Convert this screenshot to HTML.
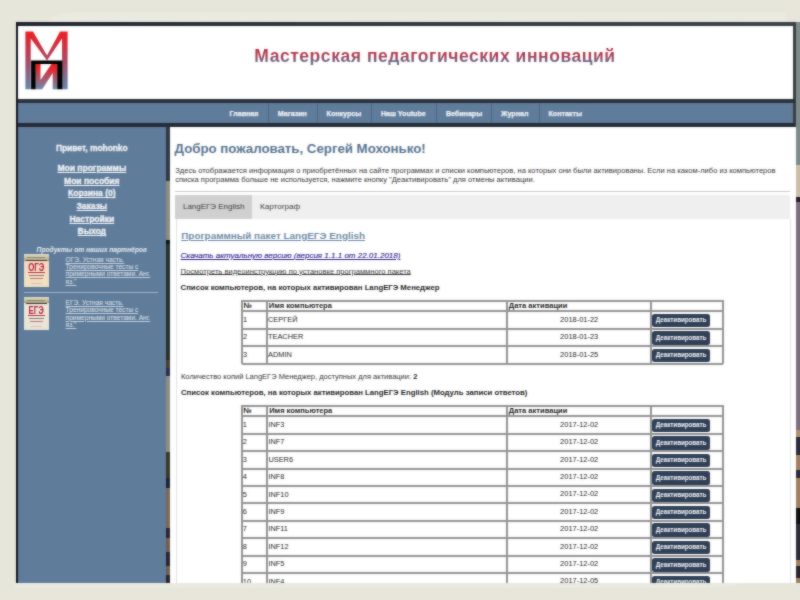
<!DOCTYPE html>
<html><head><meta charset="utf-8">
<style>
*{margin:0;padding:0;box-sizing:border-box}
html,body{width:800px;height:600px;overflow:hidden;background:#E7E6DB;font-family:"Liberation Sans",sans-serif;position:relative}
.r{position:absolute}
.t{position:absolute;white-space:nowrap;line-height:1}
.w{position:absolute;left:0;top:0;width:800px;height:600px;overflow:hidden}
.btn{position:absolute;width:57.6px;height:13.4px;background:#2F3F56;border-radius:2.5px;overflow:hidden}
.btn span{position:absolute;left:0;top:3.4px;width:57.6px;text-align:center;font-size:6.3px;line-height:1;font-weight:bold;color:#F4F6FA;letter-spacing:-0.05px;white-space:nowrap}
</style></head><body>
<div class="w">
<div class="r" style="left:0.00px;top:0.00px;width:800.00px;height:600.00px;background:#E7E6DB;"></div>
<div class="r" style="left:48.00px;top:12.00px;width:738.00px;height:10.00px;background:#EBEAE0;border-top-left-radius:30px 10px;"></div>
<div class="r" style="left:16.00px;top:22.00px;width:784.00px;height:561.00px;background:linear-gradient(90deg,#1E2330,#2E343C 40%,#3A4044);"></div>
<div class="r" style="left:16.00px;top:22.00px;width:2.30px;height:561.00px;background:#121622;"></div>
<div class="r" style="left:18.00px;top:26.00px;width:775.20px;height:73.00px;background:#FFFFFF;"></div>
<div class="r" style="left:18.00px;top:99.00px;width:777.00px;height:4.00px;background:#2B313B;"></div>
<div class="r" style="left:18.00px;top:103.00px;width:775.00px;height:19.50px;background:#5F7C9B;"></div>
<div class="r" style="left:18.00px;top:122.50px;width:777.00px;height:4.50px;background:#242B36;"></div>
<div class="r" style="left:18.00px;top:127.00px;width:147.80px;height:456.00px;background:#5F7C9B;"></div>
<div class="r" style="left:165.80px;top:127.00px;width:4.20px;height:54.00px;background:#2F3845;"></div>
<div class="r" style="left:165.80px;top:181.00px;width:4.20px;height:59.00px;background:#8E8D80;"></div>
<div class="r" style="left:165.80px;top:240.00px;width:4.20px;height:4.00px;background:#111;"></div>
<div class="r" style="left:165.80px;top:244.00px;width:4.20px;height:116.00px;background:#24302B;"></div>
<div class="r" style="left:165.80px;top:360.00px;width:4.20px;height:8.00px;background:#4A3E30;"></div>
<div class="r" style="left:165.80px;top:368.00px;width:4.20px;height:8.00px;background:#2A2E48;"></div>
<div class="r" style="left:165.80px;top:376.00px;width:4.20px;height:76.00px;background:#8D8D84;"></div>
<div class="r" style="left:165.80px;top:452.00px;width:4.20px;height:26.00px;background:#3B3629;"></div>
<div class="r" style="left:165.80px;top:478.00px;width:4.20px;height:10.00px;background:#1E2236;"></div>
<div class="r" style="left:165.80px;top:488.00px;width:4.20px;height:40.00px;background:#7A6A58;"></div>
<div class="r" style="left:165.80px;top:528.00px;width:4.20px;height:10.00px;background:#2A2430;"></div>
<div class="r" style="left:165.80px;top:538.00px;width:4.20px;height:14.00px;background:#6E6050;"></div>
<div class="r" style="left:165.80px;top:552.00px;width:4.20px;height:14.00px;background:#2A2430;"></div>
<div class="r" style="left:165.80px;top:566.00px;width:4.20px;height:9.00px;background:#6E6050;"></div>
<div class="r" style="left:165.80px;top:575.00px;width:4.20px;height:8.00px;background:#2A2430;"></div>
<div class="r" style="left:170.00px;top:127.00px;width:625.50px;height:456.00px;background:#FFFFFF;"></div>
<div class="r" style="left:796.30px;top:22.00px;width:3.70px;height:143.00px;background:#7E8C8C;"></div>
<div class="r" style="left:796.30px;top:165.00px;width:3.70px;height:32.00px;background:#CDBFA6;"></div>
<div class="r" style="left:796.30px;top:197.00px;width:3.70px;height:5.00px;background:#2A2030;"></div>
<div class="r" style="left:796.30px;top:202.00px;width:3.70px;height:228.00px;background:#7C6E7E;"></div>
<div class="r" style="left:796.30px;top:430.00px;width:3.70px;height:7.00px;background:#B09070;"></div>
<div class="r" style="left:796.30px;top:437.00px;width:3.70px;height:18.00px;background:#2A2A40;"></div>
<div class="r" style="left:796.30px;top:455.00px;width:3.70px;height:15.00px;background:#A08060;"></div>
<div class="r" style="left:796.30px;top:470.00px;width:3.70px;height:8.00px;background:#2A2A40;"></div>
<div class="r" style="left:796.30px;top:478.00px;width:3.70px;height:30.00px;background:#A08060;"></div>
<div class="r" style="left:796.30px;top:508.00px;width:3.70px;height:16.00px;background:#111;"></div>
<div class="r" style="left:796.30px;top:524.00px;width:3.70px;height:36.00px;background:#2E2A38;"></div>
<div class="r" style="left:796.30px;top:560.00px;width:3.70px;height:6.00px;background:#A08060;"></div>
<div class="r" style="left:796.30px;top:566.00px;width:3.70px;height:12.00px;background:#2A2430;"></div>
<div class="r" style="left:796.30px;top:578.00px;width:3.70px;height:5.00px;background:#A08060;"></div>
<svg class="r" style="left:0;top:0" width="80" height="100" viewBox="0 0 80 100">
<defs>
<linearGradient id="g1" x1="0" y1="31.4" x2="0" y2="89.3" gradientUnits="userSpaceOnUse"><stop offset="0" stop-color="#F01C22"/><stop offset="0.5" stop-color="#A84A64"/><stop offset="1" stop-color="#6488AE"/></linearGradient>
<linearGradient id="g2" x1="0" y1="64" x2="0" y2="89.2" gradientUnits="userSpaceOnUse"><stop offset="0.1" stop-color="#F01C22"/><stop offset="1" stop-color="#6A8CB0"/></linearGradient>
</defs>
<polygon fill="url(#g1)" points="25.4,31.4 33,31.4 47,55.5 60.1,31.4 67.6,31.4 67.6,89.3 62,89.3 62,38.5 47,60.5 30.75,38.5 30.75,89.3 25.4,89.3"/>
<polygon fill="url(#g2)" points="35.7,64 40.5,64 40.5,80 51.5,64 57.2,64 57.2,89.2 52.7,89.2 52.7,73 42.2,89.2 35.7,89.2"/>
<path fill="#000" d="M31.1,60.5H62.3V89.2H57.2V64H35.7V89.2H31.1Z"/>
</svg>
<div class="t " style="left:254.30px;top:47.58px;font-size:17.5px;font-weight:bold;font-style:normal;color:transparent;letter-spacing:0.55px;background:linear-gradient(#C02E40 0%,#B8344A 30%,#964A62 58%,#66708E 85%);-webkit-background-clip:text;background-clip:text;color:transparent;">Мастерская педагогических инноваций</div>
<div class="r" style="left:267.60px;top:103.00px;width:1.00px;height:19.50px;background:#4E6986;"></div>
<div class="r" style="left:316.70px;top:103.00px;width:1.00px;height:19.50px;background:#4E6986;"></div>
<div class="r" style="left:370.80px;top:103.00px;width:1.00px;height:19.50px;background:#4E6986;"></div>
<div class="r" style="left:435.70px;top:103.00px;width:1.00px;height:19.50px;background:#4E6986;"></div>
<div class="r" style="left:491.10px;top:103.00px;width:1.00px;height:19.50px;background:#4E6986;"></div>
<div class="r" style="left:538.80px;top:103.00px;width:1.00px;height:19.50px;background:#4E6986;"></div>
<div class="t " style="left:229.60px;top:110.59px;font-size:7.1px;font-weight:bold;font-style:normal;color:#F0F3F6;-webkit-text-stroke:0.25px currentColor;">Главная</div>
<div class="t " style="left:277.80px;top:110.59px;font-size:7.1px;font-weight:bold;font-style:normal;color:#F0F3F6;-webkit-text-stroke:0.25px currentColor;">Магазин</div>
<div class="t " style="left:326.60px;top:110.59px;font-size:7.1px;font-weight:bold;font-style:normal;color:#F0F3F6;-webkit-text-stroke:0.25px currentColor;">Конкурсы</div>
<div class="t " style="left:380.90px;top:110.59px;font-size:7.1px;font-weight:bold;font-style:normal;color:#F0F3F6;-webkit-text-stroke:0.25px currentColor;">Наш Youtube</div>
<div class="t " style="left:445.90px;top:110.59px;font-size:7.1px;font-weight:bold;font-style:normal;color:#F0F3F6;-webkit-text-stroke:0.25px currentColor;">Вебинары</div>
<div class="t " style="left:501.10px;top:110.59px;font-size:7.1px;font-weight:bold;font-style:normal;color:#F0F3F6;-webkit-text-stroke:0.25px currentColor;">Журнал</div>
<div class="t " style="left:548.50px;top:110.59px;font-size:7.1px;font-weight:bold;font-style:normal;color:#F0F3F6;-webkit-text-stroke:0.25px currentColor;">Контакты</div>
<div class="t" style="left:-58.20px;width:300px;text-align:center;top:143.69px;font-size:8.4px;font-weight:bold;font-style:normal;color:#F0F3F6;-webkit-text-stroke:0.3px currentColor;">Привет, mohonko</div>
<div class="t" style="left:-58.20px;width:300px;text-align:center;top:163.90px;font-size:8.5px;font-weight:bold;font-style:normal;color:#F0F3F6;text-decoration:underline;-webkit-text-stroke:0.3px currentColor;">Мои программы</div>
<div class="t" style="left:-58.20px;width:300px;text-align:center;top:176.60px;font-size:8.5px;font-weight:bold;font-style:normal;color:#F0F3F6;text-decoration:underline;-webkit-text-stroke:0.3px currentColor;">Мои пособия</div>
<div class="t" style="left:-58.20px;width:300px;text-align:center;top:189.30px;font-size:8.5px;font-weight:bold;font-style:normal;color:#F0F3F6;text-decoration:underline;-webkit-text-stroke:0.3px currentColor;">Корзина (0)</div>
<div class="t" style="left:-58.20px;width:300px;text-align:center;top:202.00px;font-size:8.5px;font-weight:bold;font-style:normal;color:#F0F3F6;text-decoration:underline;-webkit-text-stroke:0.3px currentColor;">Заказы</div>
<div class="t" style="left:-58.20px;width:300px;text-align:center;top:214.70px;font-size:8.5px;font-weight:bold;font-style:normal;color:#F0F3F6;text-decoration:underline;-webkit-text-stroke:0.3px currentColor;">Настройки</div>
<div class="t" style="left:-58.20px;width:300px;text-align:center;top:227.40px;font-size:8.5px;font-weight:bold;font-style:normal;color:#F0F3F6;text-decoration:underline;-webkit-text-stroke:0.3px currentColor;">Выход</div>
<div class="t " style="left:36.60px;top:246.56px;font-size:6.66px;font-weight:bold;font-style:italic;color:#E8ECF2;">Продукты от наших партнёров</div>
<div class="r" style="left:24.3px;top:253.8px;width:24.5px;height:33.2px;background:linear-gradient(#F6D6C0,#F4DEC2 60%,#F2E2C0);overflow:hidden">
<div class="r" style="left:0;top:0;width:24.5px;height:6.8px;background:linear-gradient(#E2DECA,#BEB898 70%,#A09A78)"></div>
<div class="r" style="left:3px;top:3.5px;width:18px;height:1.2px;background:#7A6E50;opacity:.7"></div>
<div class="r" style="left:2px;top:6.6px;width:20.5px;height:1px;background:#3A3A3A"></div>
<div class="t" style="left:-5px;width:34.5px;text-align:center;top:8.6px;font-size:10.75px;line-height:10.75px;font-weight:bold;color:#B82040;transform:scaleX(0.73)">ОГЭ</div>
<div class="r" style="left:3.5px;top:18px;width:17.5px;height:1.7px;background:#C03048"></div>
<div class="r" style="left:5px;top:21px;width:14.5px;height:1px;background:#8A7A78"></div>
<div class="r" style="left:5.5px;top:24.5px;width:13.5px;height:1px;background:#C07080"></div>
<div class="r" style="left:7px;top:29px;width:10.5px;height:.8px;background:#D8C0B0"></div>
</div>
<div class="r" style="left:24.3px;top:296.6px;width:24.5px;height:33.2px;background:linear-gradient(#EEE8DC,#EAE6D6);overflow:hidden">
<div class="r" style="left:0;top:0;width:24.5px;height:6.8px;background:linear-gradient(#E2DECA,#BEB898 70%,#A09A78)"></div>
<div class="r" style="left:3px;top:3.5px;width:18px;height:1.2px;background:#7A6E50;opacity:.7"></div>
<div class="r" style="left:2px;top:6.6px;width:20.5px;height:1px;background:#3A3A3A"></div>
<div class="t" style="left:-5px;width:34.5px;text-align:center;top:8.6px;font-size:10.75px;line-height:10.75px;font-weight:bold;color:#B82040;transform:scaleX(0.73)">ЕГЭ</div>
<div class="r" style="left:3.5px;top:18px;width:17.5px;height:1.7px;background:#C03048"></div>
<div class="r" style="left:5px;top:21px;width:14.5px;height:1px;background:#8A7A78"></div>
<div class="r" style="left:5.5px;top:24.5px;width:13.5px;height:1px;background:#C07080"></div>
<div class="r" style="left:7px;top:29px;width:10.5px;height:.8px;background:#D8C0B0"></div>
</div>
<div class="t " style="left:65.60px;top:257.21px;font-size:6.6px;font-weight:normal;font-style:normal;color:#E0E6EE;text-decoration:underline;text-decoration-color:rgba(230,236,242,.75);">ОГЭ. Устная часть.</div>
<div class="t " style="left:65.60px;top:264.31px;font-size:6.6px;font-weight:normal;font-style:normal;color:#E0E6EE;text-decoration:underline;text-decoration-color:rgba(230,236,242,.75);">Тренировочные тесты с</div>
<div class="t " style="left:65.60px;top:271.41px;font-size:6.6px;font-weight:normal;font-style:normal;color:#E0E6EE;text-decoration:underline;text-decoration-color:rgba(230,236,242,.75);">примерными ответами. Анг.</div>
<div class="t " style="left:65.60px;top:278.51px;font-size:6.6px;font-weight:normal;font-style:normal;color:#E0E6EE;text-decoration:underline;text-decoration-color:rgba(230,236,242,.75);">яз."</div>
<div class="r" style="left:24.40px;top:291.80px;width:133.90px;height:1.00px;background:#A3B4C8;"></div>
<div class="t " style="left:65.60px;top:300.31px;font-size:6.6px;font-weight:normal;font-style:normal;color:#E0E6EE;text-decoration:underline;text-decoration-color:rgba(230,236,242,.75);">ЕГЭ. Устная часть.</div>
<div class="t " style="left:65.60px;top:307.41px;font-size:6.6px;font-weight:normal;font-style:normal;color:#E0E6EE;text-decoration:underline;text-decoration-color:rgba(230,236,242,.75);">Тренировочные тесты с</div>
<div class="t " style="left:65.60px;top:314.51px;font-size:6.6px;font-weight:normal;font-style:normal;color:#E0E6EE;text-decoration:underline;text-decoration-color:rgba(230,236,242,.75);">примерными ответами. Анг.</div>
<div class="t " style="left:65.60px;top:321.61px;font-size:6.6px;font-weight:normal;font-style:normal;color:#E0E6EE;text-decoration:underline;text-decoration-color:rgba(230,236,242,.75);">яз."</div>
<div class="t " style="left:174.60px;top:142.08px;font-size:13.25px;font-weight:bold;font-style:normal;color:#58738F;">Добро пожаловать, Сергей Мохонько!</div>
<div class="t " style="left:175.25px;top:166.51px;font-size:7.55px;font-weight:normal;font-style:normal;color:#333;">Здесь отображается информация о приобретённых на сайте программах и списки компьютеров, на которых они были активированы. Если на каком-либо из компьютеров</div>
<div class="t " style="left:175.25px;top:175.51px;font-size:7.55px;font-weight:normal;font-style:normal;color:#333;">списка программа больше не используется, нажмите кнопку "Деактивировать" для отмены активации.</div>
<div class="r" style="left:174.75px;top:191.00px;width:615.25px;height:1.00px;background:#CBCBCB;"></div>
<div class="r" style="left:174.75px;top:195.00px;width:615.25px;height:23.80px;background:#EFEFEF;"></div>
<div class="r" style="left:174.75px;top:195.00px;width:77.25px;height:23.80px;background:#D0D0D0;"></div>
<div class="t " style="left:183.00px;top:202.84px;font-size:7.98px;font-weight:normal;font-style:normal;color:#3C3C3C;-webkit-text-stroke:0;">LangЕГЭ English</div>
<div class="t " style="left:260.00px;top:202.74px;font-size:8.1px;font-weight:normal;font-style:normal;color:#3C3C3C;-webkit-text-stroke:0;">Картограф</div>
<div class="r" style="left:175.50px;top:218.80px;width:1.00px;height:364.20px;background:#E3E3E3;"></div>
<div class="r" style="left:789.80px;top:218.80px;width:1.00px;height:364.20px;background:#E8E8E8;"></div>
<div class="t " style="left:181.25px;top:230.50px;font-size:9.92px;font-weight:bold;font-style:normal;color:#6C8BA6;text-decoration:underline;">Программный пакет LangЕГЭ English</div>
<div class="t " style="left:180.60px;top:251.73px;font-size:8.0px;font-weight:normal;font-style:italic;color:#34248E;-webkit-text-stroke:0.15px currentColor;text-decoration:underline;text-decoration-thickness:0.7px;text-underline-offset:0.6px;">Скачать актуальную версию (версия 1.1.1 от 22.01.2018)</div>
<div class="t " style="left:180.60px;top:268.39px;font-size:7.57px;font-weight:normal;font-style:normal;color:#3A3A3A;text-decoration:underline;text-decoration-thickness:0.7px;text-underline-offset:0.4px;">Посмотреть видеоинструкцию по установке программного пакета</div>
<div class="t " style="left:180.60px;top:284.14px;font-size:7.75px;font-weight:bold;font-style:normal;color:#1E1E1E;-webkit-text-stroke:0;">Список компьютеров, на которых активирован LangЕГЭ Менеджер</div>
<div class="r" style="left:241.70px;top:300.20px;width:481.00px;height:2.00px;background:#949494;"></div>
<div class="r" style="left:241.70px;top:310.00px;width:481.00px;height:2.00px;background:#949494;"></div>
<div class="r" style="left:241.70px;top:327.50px;width:481.00px;height:2.00px;background:#949494;"></div>
<div class="r" style="left:241.70px;top:345.00px;width:481.00px;height:2.00px;background:#949494;"></div>
<div class="r" style="left:241.70px;top:362.50px;width:481.00px;height:2.00px;background:#949494;"></div>
<div class="r" style="left:240.70px;top:300.20px;width:2.00px;height:64.30px;background:#949494;"></div>
<div class="r" style="left:265.50px;top:300.20px;width:2.00px;height:64.30px;background:#949494;"></div>
<div class="r" style="left:506.30px;top:300.20px;width:2.00px;height:64.30px;background:#949494;"></div>
<div class="r" style="left:650.00px;top:300.20px;width:2.00px;height:64.30px;background:#949494;"></div>
<div class="r" style="left:721.70px;top:300.20px;width:2.00px;height:64.30px;background:#949494;"></div>
<div class="t " style="left:243.70px;top:302.05px;font-size:7.5px;font-weight:bold;font-style:normal;color:#222;-webkit-text-stroke:0;">№</div>
<div class="t " style="left:268.80px;top:302.05px;font-size:7.5px;font-weight:bold;font-style:normal;color:#222;-webkit-text-stroke:0;">Имя компьютера</div>
<div class="t " style="left:508.80px;top:302.01px;font-size:7.55px;font-weight:bold;font-style:normal;color:#222;-webkit-text-stroke:0;">Дата активации</div>
<div class="t " style="left:242.90px;top:315.69px;font-size:7.4px;font-weight:normal;font-style:normal;color:#262626;">1</div>
<div class="t " style="left:268.00px;top:315.69px;font-size:7.4px;font-weight:normal;font-style:normal;color:#262626;">СЕРГЕЙ</div>
<div class="t" style="left:429.15px;width:300px;text-align:center;top:315.64px;font-size:7.45px;font-weight:normal;font-style:normal;color:#262626;">2018-01-22</div>
<div class="btn" style="left:652.30px;top:313.75px"><span>Деактивировать</span></div>
<div class="t " style="left:242.90px;top:333.19px;font-size:7.4px;font-weight:normal;font-style:normal;color:#262626;">2</div>
<div class="t " style="left:268.00px;top:333.19px;font-size:7.4px;font-weight:normal;font-style:normal;color:#262626;">TEACHER</div>
<div class="t" style="left:429.15px;width:300px;text-align:center;top:333.14px;font-size:7.45px;font-weight:normal;font-style:normal;color:#262626;">2018-01-23</div>
<div class="btn" style="left:652.30px;top:331.25px"><span>Деактивировать</span></div>
<div class="t " style="left:242.90px;top:350.69px;font-size:7.4px;font-weight:normal;font-style:normal;color:#262626;">3</div>
<div class="t " style="left:268.00px;top:350.69px;font-size:7.4px;font-weight:normal;font-style:normal;color:#262626;">ADMIN</div>
<div class="t" style="left:429.15px;width:300px;text-align:center;top:350.64px;font-size:7.45px;font-weight:normal;font-style:normal;color:#262626;">2018-01-25</div>
<div class="btn" style="left:652.30px;top:348.75px"><span>Деактивировать</span></div>
<div class="t " style="left:181.00px;top:372.55px;font-size:7.5px;font-weight:normal;font-style:normal;color:#333;">Количество копий LangЕГЭ Менеджер, доступных для активации: <b style="color:#222">2</b></div>
<div class="t " style="left:181.00px;top:388.83px;font-size:7.76px;font-weight:bold;font-style:normal;color:#1E1E1E;-webkit-text-stroke:0;">Список компьютеров, на которых активирован LangЕГЭ English (Модуль записи ответов)</div>
<div class="r" style="left:241.60px;top:405.00px;width:481.10px;height:2.00px;background:#949494;"></div>
<div class="r" style="left:241.60px;top:415.30px;width:481.10px;height:2.00px;background:#949494;"></div>
<div class="r" style="left:241.60px;top:432.70px;width:481.10px;height:2.00px;background:#949494;"></div>
<div class="r" style="left:241.60px;top:450.10px;width:481.10px;height:2.00px;background:#949494;"></div>
<div class="r" style="left:241.60px;top:467.50px;width:481.10px;height:2.00px;background:#949494;"></div>
<div class="r" style="left:241.60px;top:484.90px;width:481.10px;height:2.00px;background:#949494;"></div>
<div class="r" style="left:241.60px;top:502.30px;width:481.10px;height:2.00px;background:#949494;"></div>
<div class="r" style="left:241.60px;top:519.70px;width:481.10px;height:2.00px;background:#949494;"></div>
<div class="r" style="left:241.60px;top:537.10px;width:481.10px;height:2.00px;background:#949494;"></div>
<div class="r" style="left:241.60px;top:554.50px;width:481.10px;height:2.00px;background:#949494;"></div>
<div class="r" style="left:241.60px;top:571.90px;width:481.10px;height:2.00px;background:#949494;"></div>
<div class="r" style="left:240.60px;top:405.00px;width:2.00px;height:184.00px;background:#949494;"></div>
<div class="r" style="left:265.90px;top:405.00px;width:2.00px;height:184.00px;background:#949494;"></div>
<div class="r" style="left:506.30px;top:405.00px;width:2.00px;height:184.00px;background:#949494;"></div>
<div class="r" style="left:650.00px;top:405.00px;width:2.00px;height:184.00px;background:#949494;"></div>
<div class="r" style="left:721.70px;top:405.00px;width:2.00px;height:184.00px;background:#949494;"></div>
<div class="t " style="left:243.60px;top:407.10px;font-size:7.5px;font-weight:bold;font-style:normal;color:#222;-webkit-text-stroke:0;">№</div>
<div class="t " style="left:269.20px;top:407.10px;font-size:7.5px;font-weight:bold;font-style:normal;color:#222;-webkit-text-stroke:0;">Имя компьютера</div>
<div class="t " style="left:508.80px;top:407.06px;font-size:7.55px;font-weight:bold;font-style:normal;color:#222;-webkit-text-stroke:0;">Дата активации</div>
<div class="t " style="left:242.80px;top:420.94px;font-size:7.4px;font-weight:normal;font-style:normal;color:#262626;">1</div>
<div class="t " style="left:268.40px;top:420.94px;font-size:7.4px;font-weight:normal;font-style:normal;color:#262626;">INF3</div>
<div class="t" style="left:429.15px;width:300px;text-align:center;top:420.89px;font-size:7.45px;font-weight:normal;font-style:normal;color:#262626;">2017-12-02</div>
<div class="btn" style="left:652.30px;top:419.00px"><span>Деактивировать</span></div>
<div class="t " style="left:242.80px;top:438.34px;font-size:7.4px;font-weight:normal;font-style:normal;color:#262626;">2</div>
<div class="t " style="left:268.40px;top:438.34px;font-size:7.4px;font-weight:normal;font-style:normal;color:#262626;">INF7</div>
<div class="t" style="left:429.15px;width:300px;text-align:center;top:438.29px;font-size:7.45px;font-weight:normal;font-style:normal;color:#262626;">2017-12-02</div>
<div class="btn" style="left:652.30px;top:436.40px"><span>Деактивировать</span></div>
<div class="t " style="left:242.80px;top:455.74px;font-size:7.4px;font-weight:normal;font-style:normal;color:#262626;">3</div>
<div class="t " style="left:268.40px;top:455.74px;font-size:7.4px;font-weight:normal;font-style:normal;color:#262626;">USER6</div>
<div class="t" style="left:429.15px;width:300px;text-align:center;top:455.69px;font-size:7.45px;font-weight:normal;font-style:normal;color:#262626;">2017-12-02</div>
<div class="btn" style="left:652.30px;top:453.80px"><span>Деактивировать</span></div>
<div class="t " style="left:242.80px;top:473.14px;font-size:7.4px;font-weight:normal;font-style:normal;color:#262626;">4</div>
<div class="t " style="left:268.40px;top:473.14px;font-size:7.4px;font-weight:normal;font-style:normal;color:#262626;">INF8</div>
<div class="t" style="left:429.15px;width:300px;text-align:center;top:473.09px;font-size:7.45px;font-weight:normal;font-style:normal;color:#262626;">2017-12-02</div>
<div class="btn" style="left:652.30px;top:471.20px"><span>Деактивировать</span></div>
<div class="t " style="left:242.80px;top:490.54px;font-size:7.4px;font-weight:normal;font-style:normal;color:#262626;">5</div>
<div class="t " style="left:268.40px;top:490.54px;font-size:7.4px;font-weight:normal;font-style:normal;color:#262626;">INF10</div>
<div class="t" style="left:429.15px;width:300px;text-align:center;top:490.49px;font-size:7.45px;font-weight:normal;font-style:normal;color:#262626;">2017-12-02</div>
<div class="btn" style="left:652.30px;top:488.60px"><span>Деактивировать</span></div>
<div class="t " style="left:242.80px;top:507.94px;font-size:7.4px;font-weight:normal;font-style:normal;color:#262626;">6</div>
<div class="t " style="left:268.40px;top:507.94px;font-size:7.4px;font-weight:normal;font-style:normal;color:#262626;">INF9</div>
<div class="t" style="left:429.15px;width:300px;text-align:center;top:507.89px;font-size:7.45px;font-weight:normal;font-style:normal;color:#262626;">2017-12-02</div>
<div class="btn" style="left:652.30px;top:506.00px"><span>Деактивировать</span></div>
<div class="t " style="left:242.80px;top:525.34px;font-size:7.4px;font-weight:normal;font-style:normal;color:#262626;">7</div>
<div class="t " style="left:268.40px;top:525.34px;font-size:7.4px;font-weight:normal;font-style:normal;color:#262626;">INF11</div>
<div class="t" style="left:429.15px;width:300px;text-align:center;top:525.29px;font-size:7.45px;font-weight:normal;font-style:normal;color:#262626;">2017-12-02</div>
<div class="btn" style="left:652.30px;top:523.40px"><span>Деактивировать</span></div>
<div class="t " style="left:242.80px;top:542.74px;font-size:7.4px;font-weight:normal;font-style:normal;color:#262626;">8</div>
<div class="t " style="left:268.40px;top:542.74px;font-size:7.4px;font-weight:normal;font-style:normal;color:#262626;">INF12</div>
<div class="t" style="left:429.15px;width:300px;text-align:center;top:542.69px;font-size:7.45px;font-weight:normal;font-style:normal;color:#262626;">2017-12-02</div>
<div class="btn" style="left:652.30px;top:540.80px"><span>Деактивировать</span></div>
<div class="t " style="left:242.80px;top:560.14px;font-size:7.4px;font-weight:normal;font-style:normal;color:#262626;">9</div>
<div class="t " style="left:268.40px;top:560.14px;font-size:7.4px;font-weight:normal;font-style:normal;color:#262626;">INF5</div>
<div class="t" style="left:429.15px;width:300px;text-align:center;top:560.09px;font-size:7.45px;font-weight:normal;font-style:normal;color:#262626;">2017-12-02</div>
<div class="btn" style="left:652.30px;top:558.20px"><span>Деактивировать</span></div>
<div class="t " style="left:242.80px;top:577.54px;font-size:7.4px;font-weight:normal;font-style:normal;color:#262626;">10</div>
<div class="t " style="left:268.40px;top:577.54px;font-size:7.4px;font-weight:normal;font-style:normal;color:#262626;">INF4</div>
<div class="t" style="left:429.15px;width:300px;text-align:center;top:577.49px;font-size:7.45px;font-weight:normal;font-style:normal;color:#262626;">2017-12-05</div>
<div class="btn" style="left:652.30px;top:575.60px"><span>Деактивировать</span></div>
<div class="r" style="left:0.00px;top:583.00px;width:800.00px;height:17.00px;background:#E7E6DB;"></div>
<div class="r" style="left:14.00px;top:583.00px;width:724.00px;height:4.50px;background:#EBEAE0;border-bottom-right-radius:40px 4.5px;"></div>
</div>
<div class="w" style="filter:blur(0.8px);opacity:0.5"><div class="r" style="left:0.00px;top:0.00px;width:800.00px;height:600.00px;background:#E7E6DB;"></div>
<div class="r" style="left:48.00px;top:12.00px;width:738.00px;height:10.00px;background:#EBEAE0;border-top-left-radius:30px 10px;"></div>
<div class="r" style="left:16.00px;top:22.00px;width:784.00px;height:561.00px;background:linear-gradient(90deg,#1E2330,#2E343C 40%,#3A4044);"></div>
<div class="r" style="left:16.00px;top:22.00px;width:2.30px;height:561.00px;background:#121622;"></div>
<div class="r" style="left:18.00px;top:26.00px;width:775.20px;height:73.00px;background:#FFFFFF;"></div>
<div class="r" style="left:18.00px;top:99.00px;width:777.00px;height:4.00px;background:#2B313B;"></div>
<div class="r" style="left:18.00px;top:103.00px;width:775.00px;height:19.50px;background:#5F7C9B;"></div>
<div class="r" style="left:18.00px;top:122.50px;width:777.00px;height:4.50px;background:#242B36;"></div>
<div class="r" style="left:18.00px;top:127.00px;width:147.80px;height:456.00px;background:#5F7C9B;"></div>
<div class="r" style="left:165.80px;top:127.00px;width:4.20px;height:54.00px;background:#2F3845;"></div>
<div class="r" style="left:165.80px;top:181.00px;width:4.20px;height:59.00px;background:#8E8D80;"></div>
<div class="r" style="left:165.80px;top:240.00px;width:4.20px;height:4.00px;background:#111;"></div>
<div class="r" style="left:165.80px;top:244.00px;width:4.20px;height:116.00px;background:#24302B;"></div>
<div class="r" style="left:165.80px;top:360.00px;width:4.20px;height:8.00px;background:#4A3E30;"></div>
<div class="r" style="left:165.80px;top:368.00px;width:4.20px;height:8.00px;background:#2A2E48;"></div>
<div class="r" style="left:165.80px;top:376.00px;width:4.20px;height:76.00px;background:#8D8D84;"></div>
<div class="r" style="left:165.80px;top:452.00px;width:4.20px;height:26.00px;background:#3B3629;"></div>
<div class="r" style="left:165.80px;top:478.00px;width:4.20px;height:10.00px;background:#1E2236;"></div>
<div class="r" style="left:165.80px;top:488.00px;width:4.20px;height:40.00px;background:#7A6A58;"></div>
<div class="r" style="left:165.80px;top:528.00px;width:4.20px;height:10.00px;background:#2A2430;"></div>
<div class="r" style="left:165.80px;top:538.00px;width:4.20px;height:14.00px;background:#6E6050;"></div>
<div class="r" style="left:165.80px;top:552.00px;width:4.20px;height:14.00px;background:#2A2430;"></div>
<div class="r" style="left:165.80px;top:566.00px;width:4.20px;height:9.00px;background:#6E6050;"></div>
<div class="r" style="left:165.80px;top:575.00px;width:4.20px;height:8.00px;background:#2A2430;"></div>
<div class="r" style="left:170.00px;top:127.00px;width:625.50px;height:456.00px;background:#FFFFFF;"></div>
<div class="r" style="left:796.30px;top:22.00px;width:3.70px;height:143.00px;background:#7E8C8C;"></div>
<div class="r" style="left:796.30px;top:165.00px;width:3.70px;height:32.00px;background:#CDBFA6;"></div>
<div class="r" style="left:796.30px;top:197.00px;width:3.70px;height:5.00px;background:#2A2030;"></div>
<div class="r" style="left:796.30px;top:202.00px;width:3.70px;height:228.00px;background:#7C6E7E;"></div>
<div class="r" style="left:796.30px;top:430.00px;width:3.70px;height:7.00px;background:#B09070;"></div>
<div class="r" style="left:796.30px;top:437.00px;width:3.70px;height:18.00px;background:#2A2A40;"></div>
<div class="r" style="left:796.30px;top:455.00px;width:3.70px;height:15.00px;background:#A08060;"></div>
<div class="r" style="left:796.30px;top:470.00px;width:3.70px;height:8.00px;background:#2A2A40;"></div>
<div class="r" style="left:796.30px;top:478.00px;width:3.70px;height:30.00px;background:#A08060;"></div>
<div class="r" style="left:796.30px;top:508.00px;width:3.70px;height:16.00px;background:#111;"></div>
<div class="r" style="left:796.30px;top:524.00px;width:3.70px;height:36.00px;background:#2E2A38;"></div>
<div class="r" style="left:796.30px;top:560.00px;width:3.70px;height:6.00px;background:#A08060;"></div>
<div class="r" style="left:796.30px;top:566.00px;width:3.70px;height:12.00px;background:#2A2430;"></div>
<div class="r" style="left:796.30px;top:578.00px;width:3.70px;height:5.00px;background:#A08060;"></div>
<svg class="r" style="left:0;top:0" width="80" height="100" viewBox="0 0 80 100">
<defs>
<linearGradient id="h1" x1="0" y1="31.4" x2="0" y2="89.3" gradientUnits="userSpaceOnUse"><stop offset="0" stop-color="#F01C22"/><stop offset="0.5" stop-color="#A84A64"/><stop offset="1" stop-color="#6488AE"/></linearGradient>
<linearGradient id="h2" x1="0" y1="64" x2="0" y2="89.2" gradientUnits="userSpaceOnUse"><stop offset="0.1" stop-color="#F01C22"/><stop offset="1" stop-color="#6A8CB0"/></linearGradient>
</defs>
<polygon fill="url(#h1)" points="25.4,31.4 33,31.4 47,55.5 60.1,31.4 67.6,31.4 67.6,89.3 62,89.3 62,38.5 47,60.5 30.75,38.5 30.75,89.3 25.4,89.3"/>
<polygon fill="url(#h2)" points="35.7,64 40.5,64 40.5,80 51.5,64 57.2,64 57.2,89.2 52.7,89.2 52.7,73 42.2,89.2 35.7,89.2"/>
<path fill="#000" d="M31.1,60.5H62.3V89.2H57.2V64H35.7V89.2H31.1Z"/>
</svg>
<div class="t " style="left:254.30px;top:47.58px;font-size:17.5px;font-weight:bold;font-style:normal;color:transparent;letter-spacing:0.55px;background:linear-gradient(#C02E40 0%,#B8344A 30%,#964A62 58%,#66708E 85%);-webkit-background-clip:text;background-clip:text;color:transparent;">Мастерская педагогических инноваций</div>
<div class="r" style="left:267.60px;top:103.00px;width:1.00px;height:19.50px;background:#4E6986;"></div>
<div class="r" style="left:316.70px;top:103.00px;width:1.00px;height:19.50px;background:#4E6986;"></div>
<div class="r" style="left:370.80px;top:103.00px;width:1.00px;height:19.50px;background:#4E6986;"></div>
<div class="r" style="left:435.70px;top:103.00px;width:1.00px;height:19.50px;background:#4E6986;"></div>
<div class="r" style="left:491.10px;top:103.00px;width:1.00px;height:19.50px;background:#4E6986;"></div>
<div class="r" style="left:538.80px;top:103.00px;width:1.00px;height:19.50px;background:#4E6986;"></div>
<div class="t " style="left:229.60px;top:110.59px;font-size:7.1px;font-weight:bold;font-style:normal;color:#F0F3F6;-webkit-text-stroke:0.25px currentColor;">Главная</div>
<div class="t " style="left:277.80px;top:110.59px;font-size:7.1px;font-weight:bold;font-style:normal;color:#F0F3F6;-webkit-text-stroke:0.25px currentColor;">Магазин</div>
<div class="t " style="left:326.60px;top:110.59px;font-size:7.1px;font-weight:bold;font-style:normal;color:#F0F3F6;-webkit-text-stroke:0.25px currentColor;">Конкурсы</div>
<div class="t " style="left:380.90px;top:110.59px;font-size:7.1px;font-weight:bold;font-style:normal;color:#F0F3F6;-webkit-text-stroke:0.25px currentColor;">Наш Youtube</div>
<div class="t " style="left:445.90px;top:110.59px;font-size:7.1px;font-weight:bold;font-style:normal;color:#F0F3F6;-webkit-text-stroke:0.25px currentColor;">Вебинары</div>
<div class="t " style="left:501.10px;top:110.59px;font-size:7.1px;font-weight:bold;font-style:normal;color:#F0F3F6;-webkit-text-stroke:0.25px currentColor;">Журнал</div>
<div class="t " style="left:548.50px;top:110.59px;font-size:7.1px;font-weight:bold;font-style:normal;color:#F0F3F6;-webkit-text-stroke:0.25px currentColor;">Контакты</div>
<div class="t" style="left:-58.20px;width:300px;text-align:center;top:143.69px;font-size:8.4px;font-weight:bold;font-style:normal;color:#F0F3F6;-webkit-text-stroke:0.3px currentColor;">Привет, mohonko</div>
<div class="t" style="left:-58.20px;width:300px;text-align:center;top:163.90px;font-size:8.5px;font-weight:bold;font-style:normal;color:#F0F3F6;text-decoration:underline;-webkit-text-stroke:0.3px currentColor;">Мои программы</div>
<div class="t" style="left:-58.20px;width:300px;text-align:center;top:176.60px;font-size:8.5px;font-weight:bold;font-style:normal;color:#F0F3F6;text-decoration:underline;-webkit-text-stroke:0.3px currentColor;">Мои пособия</div>
<div class="t" style="left:-58.20px;width:300px;text-align:center;top:189.30px;font-size:8.5px;font-weight:bold;font-style:normal;color:#F0F3F6;text-decoration:underline;-webkit-text-stroke:0.3px currentColor;">Корзина (0)</div>
<div class="t" style="left:-58.20px;width:300px;text-align:center;top:202.00px;font-size:8.5px;font-weight:bold;font-style:normal;color:#F0F3F6;text-decoration:underline;-webkit-text-stroke:0.3px currentColor;">Заказы</div>
<div class="t" style="left:-58.20px;width:300px;text-align:center;top:214.70px;font-size:8.5px;font-weight:bold;font-style:normal;color:#F0F3F6;text-decoration:underline;-webkit-text-stroke:0.3px currentColor;">Настройки</div>
<div class="t" style="left:-58.20px;width:300px;text-align:center;top:227.40px;font-size:8.5px;font-weight:bold;font-style:normal;color:#F0F3F6;text-decoration:underline;-webkit-text-stroke:0.3px currentColor;">Выход</div>
<div class="t " style="left:36.60px;top:246.56px;font-size:6.66px;font-weight:bold;font-style:italic;color:#E8ECF2;">Продукты от наших партнёров</div>
<div class="r" style="left:24.3px;top:253.8px;width:24.5px;height:33.2px;background:linear-gradient(#F6D6C0,#F4DEC2 60%,#F2E2C0);overflow:hidden">
<div class="r" style="left:0;top:0;width:24.5px;height:6.8px;background:linear-gradient(#E2DECA,#BEB898 70%,#A09A78)"></div>
<div class="r" style="left:3px;top:3.5px;width:18px;height:1.2px;background:#7A6E50;opacity:.7"></div>
<div class="r" style="left:2px;top:6.6px;width:20.5px;height:1px;background:#3A3A3A"></div>
<div class="t" style="left:-5px;width:34.5px;text-align:center;top:8.6px;font-size:10.75px;line-height:10.75px;font-weight:bold;color:#B82040;transform:scaleX(0.73)">ОГЭ</div>
<div class="r" style="left:3.5px;top:18px;width:17.5px;height:1.7px;background:#C03048"></div>
<div class="r" style="left:5px;top:21px;width:14.5px;height:1px;background:#8A7A78"></div>
<div class="r" style="left:5.5px;top:24.5px;width:13.5px;height:1px;background:#C07080"></div>
<div class="r" style="left:7px;top:29px;width:10.5px;height:.8px;background:#D8C0B0"></div>
</div>
<div class="r" style="left:24.3px;top:296.6px;width:24.5px;height:33.2px;background:linear-gradient(#EEE8DC,#EAE6D6);overflow:hidden">
<div class="r" style="left:0;top:0;width:24.5px;height:6.8px;background:linear-gradient(#E2DECA,#BEB898 70%,#A09A78)"></div>
<div class="r" style="left:3px;top:3.5px;width:18px;height:1.2px;background:#7A6E50;opacity:.7"></div>
<div class="r" style="left:2px;top:6.6px;width:20.5px;height:1px;background:#3A3A3A"></div>
<div class="t" style="left:-5px;width:34.5px;text-align:center;top:8.6px;font-size:10.75px;line-height:10.75px;font-weight:bold;color:#B82040;transform:scaleX(0.73)">ЕГЭ</div>
<div class="r" style="left:3.5px;top:18px;width:17.5px;height:1.7px;background:#C03048"></div>
<div class="r" style="left:5px;top:21px;width:14.5px;height:1px;background:#8A7A78"></div>
<div class="r" style="left:5.5px;top:24.5px;width:13.5px;height:1px;background:#C07080"></div>
<div class="r" style="left:7px;top:29px;width:10.5px;height:.8px;background:#D8C0B0"></div>
</div>
<div class="t " style="left:65.60px;top:257.21px;font-size:6.6px;font-weight:normal;font-style:normal;color:#E0E6EE;text-decoration:underline;text-decoration-color:rgba(230,236,242,.75);">ОГЭ. Устная часть.</div>
<div class="t " style="left:65.60px;top:264.31px;font-size:6.6px;font-weight:normal;font-style:normal;color:#E0E6EE;text-decoration:underline;text-decoration-color:rgba(230,236,242,.75);">Тренировочные тесты с</div>
<div class="t " style="left:65.60px;top:271.41px;font-size:6.6px;font-weight:normal;font-style:normal;color:#E0E6EE;text-decoration:underline;text-decoration-color:rgba(230,236,242,.75);">примерными ответами. Анг.</div>
<div class="t " style="left:65.60px;top:278.51px;font-size:6.6px;font-weight:normal;font-style:normal;color:#E0E6EE;text-decoration:underline;text-decoration-color:rgba(230,236,242,.75);">яз."</div>
<div class="r" style="left:24.40px;top:291.80px;width:133.90px;height:1.00px;background:#A3B4C8;"></div>
<div class="t " style="left:65.60px;top:300.31px;font-size:6.6px;font-weight:normal;font-style:normal;color:#E0E6EE;text-decoration:underline;text-decoration-color:rgba(230,236,242,.75);">ЕГЭ. Устная часть.</div>
<div class="t " style="left:65.60px;top:307.41px;font-size:6.6px;font-weight:normal;font-style:normal;color:#E0E6EE;text-decoration:underline;text-decoration-color:rgba(230,236,242,.75);">Тренировочные тесты с</div>
<div class="t " style="left:65.60px;top:314.51px;font-size:6.6px;font-weight:normal;font-style:normal;color:#E0E6EE;text-decoration:underline;text-decoration-color:rgba(230,236,242,.75);">примерными ответами. Анг.</div>
<div class="t " style="left:65.60px;top:321.61px;font-size:6.6px;font-weight:normal;font-style:normal;color:#E0E6EE;text-decoration:underline;text-decoration-color:rgba(230,236,242,.75);">яз."</div>
<div class="t " style="left:174.60px;top:142.08px;font-size:13.25px;font-weight:bold;font-style:normal;color:#58738F;">Добро пожаловать, Сергей Мохонько!</div>
<div class="t " style="left:175.25px;top:166.51px;font-size:7.55px;font-weight:normal;font-style:normal;color:#333;">Здесь отображается информация о приобретённых на сайте программах и списки компьютеров, на которых они были активированы. Если на каком-либо из компьютеров</div>
<div class="t " style="left:175.25px;top:175.51px;font-size:7.55px;font-weight:normal;font-style:normal;color:#333;">списка программа больше не используется, нажмите кнопку "Деактивировать" для отмены активации.</div>
<div class="r" style="left:174.75px;top:191.00px;width:615.25px;height:1.00px;background:#CBCBCB;"></div>
<div class="r" style="left:174.75px;top:195.00px;width:615.25px;height:23.80px;background:#EFEFEF;"></div>
<div class="r" style="left:174.75px;top:195.00px;width:77.25px;height:23.80px;background:#D0D0D0;"></div>
<div class="t " style="left:183.00px;top:202.84px;font-size:7.98px;font-weight:normal;font-style:normal;color:#3C3C3C;-webkit-text-stroke:0;">LangЕГЭ English</div>
<div class="t " style="left:260.00px;top:202.74px;font-size:8.1px;font-weight:normal;font-style:normal;color:#3C3C3C;-webkit-text-stroke:0;">Картограф</div>
<div class="r" style="left:175.50px;top:218.80px;width:1.00px;height:364.20px;background:#E3E3E3;"></div>
<div class="r" style="left:789.80px;top:218.80px;width:1.00px;height:364.20px;background:#E8E8E8;"></div>
<div class="t " style="left:181.25px;top:230.50px;font-size:9.92px;font-weight:bold;font-style:normal;color:#6C8BA6;text-decoration:underline;">Программный пакет LangЕГЭ English</div>
<div class="t " style="left:180.60px;top:251.73px;font-size:8.0px;font-weight:normal;font-style:italic;color:#34248E;-webkit-text-stroke:0.15px currentColor;text-decoration:underline;text-decoration-thickness:0.7px;text-underline-offset:0.6px;">Скачать актуальную версию (версия 1.1.1 от 22.01.2018)</div>
<div class="t " style="left:180.60px;top:268.39px;font-size:7.57px;font-weight:normal;font-style:normal;color:#3A3A3A;text-decoration:underline;text-decoration-thickness:0.7px;text-underline-offset:0.4px;">Посмотреть видеоинструкцию по установке программного пакета</div>
<div class="t " style="left:180.60px;top:284.14px;font-size:7.75px;font-weight:bold;font-style:normal;color:#1E1E1E;-webkit-text-stroke:0;">Список компьютеров, на которых активирован LangЕГЭ Менеджер</div>
<div class="r" style="left:241.70px;top:300.20px;width:481.00px;height:2.00px;background:#949494;"></div>
<div class="r" style="left:241.70px;top:310.00px;width:481.00px;height:2.00px;background:#949494;"></div>
<div class="r" style="left:241.70px;top:327.50px;width:481.00px;height:2.00px;background:#949494;"></div>
<div class="r" style="left:241.70px;top:345.00px;width:481.00px;height:2.00px;background:#949494;"></div>
<div class="r" style="left:241.70px;top:362.50px;width:481.00px;height:2.00px;background:#949494;"></div>
<div class="r" style="left:240.70px;top:300.20px;width:2.00px;height:64.30px;background:#949494;"></div>
<div class="r" style="left:265.50px;top:300.20px;width:2.00px;height:64.30px;background:#949494;"></div>
<div class="r" style="left:506.30px;top:300.20px;width:2.00px;height:64.30px;background:#949494;"></div>
<div class="r" style="left:650.00px;top:300.20px;width:2.00px;height:64.30px;background:#949494;"></div>
<div class="r" style="left:721.70px;top:300.20px;width:2.00px;height:64.30px;background:#949494;"></div>
<div class="t " style="left:243.70px;top:302.05px;font-size:7.5px;font-weight:bold;font-style:normal;color:#222;-webkit-text-stroke:0;">№</div>
<div class="t " style="left:268.80px;top:302.05px;font-size:7.5px;font-weight:bold;font-style:normal;color:#222;-webkit-text-stroke:0;">Имя компьютера</div>
<div class="t " style="left:508.80px;top:302.01px;font-size:7.55px;font-weight:bold;font-style:normal;color:#222;-webkit-text-stroke:0;">Дата активации</div>
<div class="t " style="left:242.90px;top:315.69px;font-size:7.4px;font-weight:normal;font-style:normal;color:#262626;">1</div>
<div class="t " style="left:268.00px;top:315.69px;font-size:7.4px;font-weight:normal;font-style:normal;color:#262626;">СЕРГЕЙ</div>
<div class="t" style="left:429.15px;width:300px;text-align:center;top:315.64px;font-size:7.45px;font-weight:normal;font-style:normal;color:#262626;">2018-01-22</div>
<div class="btn" style="left:652.30px;top:313.75px"><span>Деактивировать</span></div>
<div class="t " style="left:242.90px;top:333.19px;font-size:7.4px;font-weight:normal;font-style:normal;color:#262626;">2</div>
<div class="t " style="left:268.00px;top:333.19px;font-size:7.4px;font-weight:normal;font-style:normal;color:#262626;">TEACHER</div>
<div class="t" style="left:429.15px;width:300px;text-align:center;top:333.14px;font-size:7.45px;font-weight:normal;font-style:normal;color:#262626;">2018-01-23</div>
<div class="btn" style="left:652.30px;top:331.25px"><span>Деактивировать</span></div>
<div class="t " style="left:242.90px;top:350.69px;font-size:7.4px;font-weight:normal;font-style:normal;color:#262626;">3</div>
<div class="t " style="left:268.00px;top:350.69px;font-size:7.4px;font-weight:normal;font-style:normal;color:#262626;">ADMIN</div>
<div class="t" style="left:429.15px;width:300px;text-align:center;top:350.64px;font-size:7.45px;font-weight:normal;font-style:normal;color:#262626;">2018-01-25</div>
<div class="btn" style="left:652.30px;top:348.75px"><span>Деактивировать</span></div>
<div class="t " style="left:181.00px;top:372.55px;font-size:7.5px;font-weight:normal;font-style:normal;color:#333;">Количество копий LangЕГЭ Менеджер, доступных для активации: <b style="color:#222">2</b></div>
<div class="t " style="left:181.00px;top:388.83px;font-size:7.76px;font-weight:bold;font-style:normal;color:#1E1E1E;-webkit-text-stroke:0;">Список компьютеров, на которых активирован LangЕГЭ English (Модуль записи ответов)</div>
<div class="r" style="left:241.60px;top:405.00px;width:481.10px;height:2.00px;background:#949494;"></div>
<div class="r" style="left:241.60px;top:415.30px;width:481.10px;height:2.00px;background:#949494;"></div>
<div class="r" style="left:241.60px;top:432.70px;width:481.10px;height:2.00px;background:#949494;"></div>
<div class="r" style="left:241.60px;top:450.10px;width:481.10px;height:2.00px;background:#949494;"></div>
<div class="r" style="left:241.60px;top:467.50px;width:481.10px;height:2.00px;background:#949494;"></div>
<div class="r" style="left:241.60px;top:484.90px;width:481.10px;height:2.00px;background:#949494;"></div>
<div class="r" style="left:241.60px;top:502.30px;width:481.10px;height:2.00px;background:#949494;"></div>
<div class="r" style="left:241.60px;top:519.70px;width:481.10px;height:2.00px;background:#949494;"></div>
<div class="r" style="left:241.60px;top:537.10px;width:481.10px;height:2.00px;background:#949494;"></div>
<div class="r" style="left:241.60px;top:554.50px;width:481.10px;height:2.00px;background:#949494;"></div>
<div class="r" style="left:241.60px;top:571.90px;width:481.10px;height:2.00px;background:#949494;"></div>
<div class="r" style="left:240.60px;top:405.00px;width:2.00px;height:184.00px;background:#949494;"></div>
<div class="r" style="left:265.90px;top:405.00px;width:2.00px;height:184.00px;background:#949494;"></div>
<div class="r" style="left:506.30px;top:405.00px;width:2.00px;height:184.00px;background:#949494;"></div>
<div class="r" style="left:650.00px;top:405.00px;width:2.00px;height:184.00px;background:#949494;"></div>
<div class="r" style="left:721.70px;top:405.00px;width:2.00px;height:184.00px;background:#949494;"></div>
<div class="t " style="left:243.60px;top:407.10px;font-size:7.5px;font-weight:bold;font-style:normal;color:#222;-webkit-text-stroke:0;">№</div>
<div class="t " style="left:269.20px;top:407.10px;font-size:7.5px;font-weight:bold;font-style:normal;color:#222;-webkit-text-stroke:0;">Имя компьютера</div>
<div class="t " style="left:508.80px;top:407.06px;font-size:7.55px;font-weight:bold;font-style:normal;color:#222;-webkit-text-stroke:0;">Дата активации</div>
<div class="t " style="left:242.80px;top:420.94px;font-size:7.4px;font-weight:normal;font-style:normal;color:#262626;">1</div>
<div class="t " style="left:268.40px;top:420.94px;font-size:7.4px;font-weight:normal;font-style:normal;color:#262626;">INF3</div>
<div class="t" style="left:429.15px;width:300px;text-align:center;top:420.89px;font-size:7.45px;font-weight:normal;font-style:normal;color:#262626;">2017-12-02</div>
<div class="btn" style="left:652.30px;top:419.00px"><span>Деактивировать</span></div>
<div class="t " style="left:242.80px;top:438.34px;font-size:7.4px;font-weight:normal;font-style:normal;color:#262626;">2</div>
<div class="t " style="left:268.40px;top:438.34px;font-size:7.4px;font-weight:normal;font-style:normal;color:#262626;">INF7</div>
<div class="t" style="left:429.15px;width:300px;text-align:center;top:438.29px;font-size:7.45px;font-weight:normal;font-style:normal;color:#262626;">2017-12-02</div>
<div class="btn" style="left:652.30px;top:436.40px"><span>Деактивировать</span></div>
<div class="t " style="left:242.80px;top:455.74px;font-size:7.4px;font-weight:normal;font-style:normal;color:#262626;">3</div>
<div class="t " style="left:268.40px;top:455.74px;font-size:7.4px;font-weight:normal;font-style:normal;color:#262626;">USER6</div>
<div class="t" style="left:429.15px;width:300px;text-align:center;top:455.69px;font-size:7.45px;font-weight:normal;font-style:normal;color:#262626;">2017-12-02</div>
<div class="btn" style="left:652.30px;top:453.80px"><span>Деактивировать</span></div>
<div class="t " style="left:242.80px;top:473.14px;font-size:7.4px;font-weight:normal;font-style:normal;color:#262626;">4</div>
<div class="t " style="left:268.40px;top:473.14px;font-size:7.4px;font-weight:normal;font-style:normal;color:#262626;">INF8</div>
<div class="t" style="left:429.15px;width:300px;text-align:center;top:473.09px;font-size:7.45px;font-weight:normal;font-style:normal;color:#262626;">2017-12-02</div>
<div class="btn" style="left:652.30px;top:471.20px"><span>Деактивировать</span></div>
<div class="t " style="left:242.80px;top:490.54px;font-size:7.4px;font-weight:normal;font-style:normal;color:#262626;">5</div>
<div class="t " style="left:268.40px;top:490.54px;font-size:7.4px;font-weight:normal;font-style:normal;color:#262626;">INF10</div>
<div class="t" style="left:429.15px;width:300px;text-align:center;top:490.49px;font-size:7.45px;font-weight:normal;font-style:normal;color:#262626;">2017-12-02</div>
<div class="btn" style="left:652.30px;top:488.60px"><span>Деактивировать</span></div>
<div class="t " style="left:242.80px;top:507.94px;font-size:7.4px;font-weight:normal;font-style:normal;color:#262626;">6</div>
<div class="t " style="left:268.40px;top:507.94px;font-size:7.4px;font-weight:normal;font-style:normal;color:#262626;">INF9</div>
<div class="t" style="left:429.15px;width:300px;text-align:center;top:507.89px;font-size:7.45px;font-weight:normal;font-style:normal;color:#262626;">2017-12-02</div>
<div class="btn" style="left:652.30px;top:506.00px"><span>Деактивировать</span></div>
<div class="t " style="left:242.80px;top:525.34px;font-size:7.4px;font-weight:normal;font-style:normal;color:#262626;">7</div>
<div class="t " style="left:268.40px;top:525.34px;font-size:7.4px;font-weight:normal;font-style:normal;color:#262626;">INF11</div>
<div class="t" style="left:429.15px;width:300px;text-align:center;top:525.29px;font-size:7.45px;font-weight:normal;font-style:normal;color:#262626;">2017-12-02</div>
<div class="btn" style="left:652.30px;top:523.40px"><span>Деактивировать</span></div>
<div class="t " style="left:242.80px;top:542.74px;font-size:7.4px;font-weight:normal;font-style:normal;color:#262626;">8</div>
<div class="t " style="left:268.40px;top:542.74px;font-size:7.4px;font-weight:normal;font-style:normal;color:#262626;">INF12</div>
<div class="t" style="left:429.15px;width:300px;text-align:center;top:542.69px;font-size:7.45px;font-weight:normal;font-style:normal;color:#262626;">2017-12-02</div>
<div class="btn" style="left:652.30px;top:540.80px"><span>Деактивировать</span></div>
<div class="t " style="left:242.80px;top:560.14px;font-size:7.4px;font-weight:normal;font-style:normal;color:#262626;">9</div>
<div class="t " style="left:268.40px;top:560.14px;font-size:7.4px;font-weight:normal;font-style:normal;color:#262626;">INF5</div>
<div class="t" style="left:429.15px;width:300px;text-align:center;top:560.09px;font-size:7.45px;font-weight:normal;font-style:normal;color:#262626;">2017-12-02</div>
<div class="btn" style="left:652.30px;top:558.20px"><span>Деактивировать</span></div>
<div class="t " style="left:242.80px;top:577.54px;font-size:7.4px;font-weight:normal;font-style:normal;color:#262626;">10</div>
<div class="t " style="left:268.40px;top:577.54px;font-size:7.4px;font-weight:normal;font-style:normal;color:#262626;">INF4</div>
<div class="t" style="left:429.15px;width:300px;text-align:center;top:577.49px;font-size:7.45px;font-weight:normal;font-style:normal;color:#262626;">2017-12-05</div>
<div class="btn" style="left:652.30px;top:575.60px"><span>Деактивировать</span></div>
<div class="r" style="left:0.00px;top:583.00px;width:800.00px;height:17.00px;background:#E7E6DB;"></div>
<div class="r" style="left:14.00px;top:583.00px;width:724.00px;height:4.50px;background:#EBEAE0;border-bottom-right-radius:40px 4.5px;"></div></div>
</body></html>
